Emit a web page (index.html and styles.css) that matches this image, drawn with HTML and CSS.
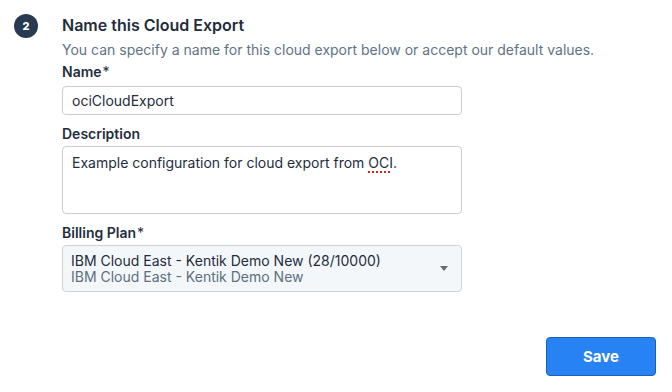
FILE: index.html
```html
<!DOCTYPE html>
<html lang="en">
  <head>
    <meta charset="UTF-8" />
    <meta name="viewport" content="width=device-width, initial-scale=1.0" />
    <title>Name this Cloud Export</title>
    <link rel="stylesheet" href="styles.css">
  </head>
  <body>
    <div class="step">
      <div class="step-badge">2</div>
      <div class="step-body">
        <h3 class="step-title">Name this Cloud Export</h3>
        <p class="step-help">
          You can specify a name for this cloud export below or accept our default values.
        </p>

        <label class="field-label label-name" for="exportName">Name<span class="req">*</span></label>
        <input class="text-input" type="text" id="exportName" value="ociCloudExport" />

        <label class="field-label">Description</label>
        <div class="text-area">
          Example configuration for cloud export from <span class="misspelled">OCI</span>.
        </div>

        <label class="field-label">Billing Plan<span class="req">*</span></label>
        <div class="select-box">
          <div class="select-text">
            <div class="select-main">IBM Cloud East - Kentik Demo New (28/10000)</div>
            <div class="select-sub">IBM Cloud East - Kentik Demo New</div>
          </div>
          <span class="caret"></span>
        </div>
      </div>
    </div>

    <div class="footer">
      <button class="save-btn">Save</button>
    </div>
  </body>
</html>
```

FILE: styles.css
```css
body {
  font-family: Inter, "Noto Sans", sans-serif;
  background-color: #ffffff;
  color: #1f2d3d;
  margin: 0;
}
.step {
  display: flex;
  gap: 24px;
  padding: 14px 0 0 14px;
}
.step-badge {
  width: 24px;
  height: 24px;
  border-radius: 50%;
  background: #283a4f;
  color: white;
  font-size: 11px;
  font-weight: 800;
  display: flex;
  align-items: center;
  justify-content: center;
  flex-shrink: 0;
}
.step-body {
  width: 400px;
  display: flex;
  flex-direction: column;
}
.step-title {
  margin: 1px 0 0;
  font-size: 16px;
  line-height: 20px;
  font-weight: 600;
  color: #1f2d3d;
}
.step-help {
  margin: 5px 0 0;
  font-size: 14px;
  line-height: 20px;
  color: #5f7386;
  white-space: nowrap;
}
.field-label {
  display: block;
  font-size: 14px;
  line-height: 20px;
  font-weight: 600;
  color: #1f2d3d;
  margin: 9px 0 2px;
}
.label-name {
  margin-top: 2px;
  margin-bottom: 4px;
}
.req {
  font-weight: 400;
  margin-left: 1px;
}
.text-input {
  box-sizing: border-box;
  width: 400px;
  height: 29px;
  padding: 0 9px;
  border: 1px solid #c9ced4;
  border-radius: 4px;
  font-family: inherit;
  font-size: 14px;
  color: #1f2d3d;
  margin: 0;
}
.text-area {
  box-sizing: border-box;
  height: 68px;
  padding: 6px 9px;
  border: 1px solid #c9ced4;
  border-radius: 4px;
  font-size: 14px;
  line-height: 20px;
  color: #1f2d3d;
}
.misspelled {
  text-decoration: underline dotted #e0201c;
  text-decoration-thickness: 2px;
  text-underline-offset: 3px;
}
.select-box {
  box-sizing: border-box;
  height: 47px;
  padding: 0 13px 0 8px;
  border: 1px solid #cdd3d9;
  border-radius: 4px;
  background: #f4f7fa;
  display: flex;
  align-items: center;
  justify-content: space-between;
}
.select-text {
  font-size: 14px;
  line-height: 16px;
}
.select-main {
  color: #1f2d3d;
}
.select-sub {
  color: #5c7080;
}
.caret {
  width: 0;
  height: 0;
  border-left: 4px solid transparent;
  border-right: 4px solid transparent;
  border-top: 5px solid #5c7080;
}
.footer {
  display: flex;
  justify-content: flex-end;
  padding: 45px 16px 0 0;
}
.save-btn {
  width: 110px;
  height: 39px;
  border: 1px solid #1c5fb8;
  border-radius: 4px;
  background-color: #2783f3;
  color: white;
  font-family: inherit;
  font-size: 15px;
  font-weight: 700;
  cursor: pointer;
}
```
